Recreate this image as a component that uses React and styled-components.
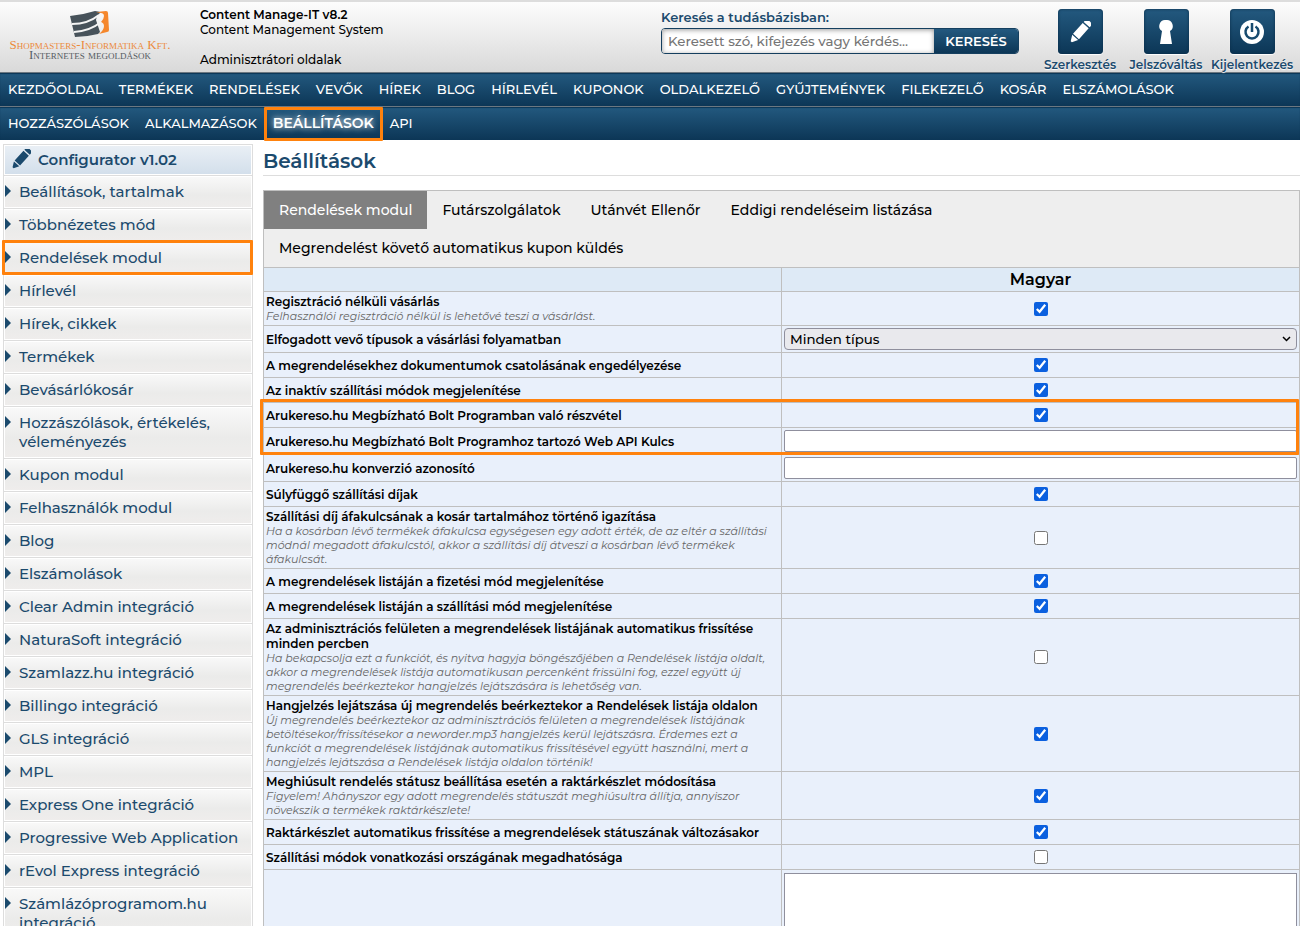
import React from 'react';
import styled, { createGlobalStyle, css } from 'styled-components';

const GlobalStyle = createGlobalStyle`
	* {
		box-sizing: border-box;
	}
	body {
		margin: 0;
		background: #fff;
		color: #000;
		font-family: Montserrat, Inter, 'Noto Sans', sans-serif;
		font-size: 13px;
		font-weight: 500;
		line-height: 15px;
	}
	a {
		color: inherit;
		text-decoration: none;
	}
	#root {
		height: 100vh;
		overflow: hidden;
	}
`;

const navy = '#1b4a6d';
const orange = '#ff820d';
const line = '#bfbfbf';
const blueGradient = 'linear-gradient(#23597f, #0c3656)';

const outline = css`
	position: relative;
	z-index: 1;
	&::after {
		content: '';
		position: absolute;
		border: 3px solid ${orange};
		border-radius: 1px;
		pointer-events: none;
	}
`;

const Header = styled.header`
	display: flex;
	height: 72px;
	border-top: 2px solid #ddd;
	background: linear-gradient(#fdfdfd, #d9d9d9);
`;

const Brand = styled.a`
	display: flex;
	flex-direction: column;
	align-items: center;
	width: 180px;
	margin-right: 20px;
	padding-top: 9px;
	font-family: 'Liberation Serif', serif;
	font-variant: small-caps;
	font-weight: 400;
	font-size: 13px;
	line-height: 10px;
	color: #555c62;
	white-space: nowrap;
	svg {
		display: block;
		margin-bottom: 2px;
	}
	span {
		color: #ec8a3c;
	}
`;

const Info = styled.div`
	flex: 1;
	padding-top: 5px;
	font-size: 12px;
	strong {
		font-weight: 600;
	}
	p {
		margin: 0 0 15px;
	}
`;

const Search = styled.form`
	width: 358px;
	margin-right: 18px;
	padding-top: 8px;
	label {
		display: block;
		margin-bottom: 3px;
		font-weight: 600;
		color: ${navy};
	}
	div {
		display: flex;
		height: 26px;
		border: 1px solid #153f5f;
		border-radius: 4px;
		overflow: hidden;
	}
	input {
		flex: 1;
		min-width: 0;
		border: 0;
		padding: 0 6px;
		font-family: inherit;
		font-weight: inherit;
		background: #fff;
		box-shadow: inset 0 1px 5px #999;
	}
	input::placeholder {
		color: #757575;
	}
	button {
		width: 84px;
		border: 0;
		padding: 0;
		font: inherit;
		font-weight: 600;
		color: #fff;
		background: ${blueGradient};
	}
`;

const Actions = styled.div`
	display: flex;
	padding-right: 5px;
`;

const Action = styled.a`
	display: flex;
	flex-direction: column;
	align-items: center;
	width: 86px;
	padding-top: 7px;
	font-size: 12px;
	font-weight: 600;
	color: ${navy};
	text-shadow: 0 1px 1px #fff;
	white-space: nowrap;
	span {
		display: flex;
		align-items: center;
		justify-content: center;
		width: 45px;
		height: 45px;
		margin-bottom: 3px;
		border-radius: 4px;
		background: ${blueGradient};
		box-shadow: inset 0 0 3px #0a2c47, 0 1px 1px #fff;
	}
`;

const Nav = styled.nav`
	display: flex;
	height: 34px;
	border-top: 1px solid #6c7780;
	background: ${blueGradient};
	box-shadow: inset 0 1px 1px #0c3656;
	color: #fff;
`;

const NavLink = styled.a`
	padding: 0 8px;
	line-height: 32px;
	white-space: nowrap;
	${(p) =>
		p.$active &&
		css`
			font-size: 14px;
			font-weight: 600;
			text-shadow: 0 0 6px #fff;
			${outline}
			&::after {
				inset: 0 -1px -1px;
			}
		`}
`;

const Columns = styled.div`
	display: flex;
	align-items: flex-start;
`;

const Sidebar = styled.aside`
	width: 250px;
	margin: 4px 10px 0 3px;
	border: 1px solid #ddd;
	color: ${navy};
`;

const SidebarTitle = styled.h2`
	display: flex;
	align-items: center;
	gap: 7px;
	height: 30px;
	margin: 0;
	padding: 0 0 2px 6px;
	border: 1px solid #fff;
	background: linear-gradient(#e9eff5, #d3dfeb);
	font-size: 15px;
	font-weight: 600;
`;

const SidebarItem = styled.a`
	display: block;
	position: relative;
	border-top: 1px solid #ddd;
	padding: 6px 8px 7px 15px;
	font-size: 15px;
	line-height: 19px;
	background: linear-gradient(#f9f9f9, #ebebea 60%, #efedec);
	box-shadow: inset 0 0 0 1px #fff;
	&::before {
		content: '';
		position: absolute;
		top: 9px;
		left: 1px;
		border: 6px solid transparent;
		border-left-color: ${navy};
		border-right: 0;
	}
	${(p) =>
		p.$active &&
		css`
			${outline}
			&::after {
				inset: -2px -1px -1px -2px;
			}
		`}
`;

const Main = styled.main`
	flex: 1;
	min-width: 0;
	h1 {
		margin: 0 0 14px;
		padding: 9px 0 2px;
		border-bottom: 1px solid #ddd;
		font-size: 20px;
		font-weight: 600;
		line-height: 24px;
		color: ${navy};
	}
`;

const Panel = styled.div`
	border: 1px solid ${line};
	border-bottom: 0;
`;

const Tabs = styled.div`
	display: flex;
	flex-wrap: wrap;
	background: #eee;
`;

const Tab = styled.button`
	height: 38px;
	border: 0;
	padding: 0 15px;
	font: inherit;
	font-size: 14px;
	color: ${(p) => (p.$active ? '#fff' : '#000')};
	background: ${(p) => (p.$active ? '#808080' : 'transparent')};
`;

const Table = styled.table`
	width: 100%;
	border-collapse: collapse;
	table-layout: fixed;
	background: #e9f0fb;
	th,
	td {
		border-top: 1px solid ${line};
		padding: 2px;
		text-align: left;
		font-weight: inherit;
	}
	th + th,
	th + td {
		border-left: 1px solid ${line};
	}
	thead tr {
		background: #deeaf6;
	}
	thead th {
		height: 24px;
		font-size: 16px;
		font-weight: 600;
		line-height: 19px;
		text-align: center;
	}
`;

const Group = styled.tbody`
	${(p) =>
		p.$marked &&
		css`
			${outline}
			&::after {
				inset: -4px 0 0 -4px;
			}
		`}
`;

const Label = styled.label`
	display: block;
	font-size: 12px;
	font-weight: 600;
	line-height: 15px;
	white-space: pre-line;
`;

const Hint = styled.small`
	display: block;
	font-size: 11px;
	font-style: italic;
	font-weight: 400;
	line-height: 14px;
	color: #666;
	white-space: pre-line;
`;

const Checkbox = styled.input`
	display: block;
	width: 14px;
	height: 14px;
	margin: 3px auto;
	accent-color: #0b60df;
`;

const field = css`
	display: block;
	width: 100%;
	border: 1px solid #8f8f9d;
	font-family: inherit;
	font-weight: inherit;
	background: #fff;
`;

const TextInput = styled.input`
	${field}
	height: 22px;
	border-radius: 2px;
`;

const TextArea = styled.textarea`
	${field}
	height: 90px;
	margin-top: 1px;
	resize: none;
`;

const SelectWrap = styled.div`
	display: grid;
	align-items: center;
	select,
	svg {
		grid-area: 1 / 1;
	}
	svg {
		justify-self: end;
		margin-right: 6px;
		pointer-events: none;
	}
`;

const Select = styled.select`
	${field}
	height: 22px;
	border-radius: 4px;
	padding: 0 5px;
	appearance: none;
	background: #e9e9ed;
	color: #000;
`;

const Logo = () => (
	<svg width="40" height="27" viewBox="0 0 40 27">
		<path d="M0 5Q12 4 25 0L31 1Q27 4 26 9L30 21 28 23Q16 26 5 26z" fill="#47525a" />
		<path
			d="M26 2Q31 0 36 0q2 0 2 2l1 17q0 2-2 2l-8 2q5-4 5-8 0-3-3-4 3-3 3-6 0-4-8-3z"
			fill="#f5872c"
		/>
		<path
			d="M2 13Q18 13 29 4M4 21Q20 20 31 11"
			fill="none"
			stroke="#f4f4f4"
			strokeWidth="2"
		/>
	</svg>
);

const Pencil = ({ size, color }) => (
	<svg width={size} height={size} viewBox="0 0 22 22" fill={color}>
		<g transform="rotate(42 11 11)">
			<path d="M7 1v-1.500a4 3 0 0 1 8 0V1zM7 2.500h8v14.500H7zM7 18.200h8l-3.200 5.800h-1.600z" />
		</g>
	</svg>
);

const Keyhole = () => (
	<svg width="24" height="26" viewBox="0 0 24 26" fill="#fff">
		<path d="M12 1a6 6 0 0 1 4 11l2 13H6l2-13a6 6 0 0 1 4-11z" />
	</svg>
);

const Power = () => (
	<svg width="26" height="26" viewBox="0 0 26 26">
		<circle cx="13" cy="13" r="12" fill="#fff" />
		<path
			d="M9.500 7.500a6.500 6.500 0 1 0 7 0M13 4v9"
			fill="none"
			stroke="#174a6e"
			strokeWidth="2.500"
		/>
	</svg>
);

const actions = [
	['Szerkesztés', <Pencil size={22} color="#fff" />],
	['Jelszóváltás', <Keyhole />],
	['Kijelentkezés', <Power />],
];

const mainMenu = [
	'KEZDŐOLDAL',
	'TERMÉKEK',
	'RENDELÉSEK',
	'VEVŐK',
	'HÍREK',
	'BLOG',
	'HÍRLEVÉL',
	'KUPONOK',
	'OLDALKEZELŐ',
	'GYŰJTEMÉNYEK',
	'FILEKEZELŐ',
	'KOSÁR',
	'ELSZÁMOLÁSOK',
];

const subMenu = ['HOZZÁSZÓLÁSOK', 'ALKALMAZÁSOK', 'BEÁLLÍTÁSOK', 'API'];

const sideMenu = [
	'Beállítások, tartalmak',
	'Többnézetes mód',
	'Rendelések modul',
	'Hírlevél',
	'Hírek, cikkek',
	'Termékek',
	'Bevásárlókosár',
	'Hozzászólások, értékelés, véleményezés',
	'Kupon modul',
	'Felhasználók modul',
	'Blog',
	'Elszámolások',
	'Clear Admin integráció',
	'NaturaSoft integráció',
	'Szamlazz.hu integráció',
	'Billingo integráció',
	'GLS integráció',
	'MPL',
	'Express One integráció',
	'Progressive Web Application',
	'rEvol Express integráció',
	'Számlázóprogramom.hu integráció',
];

const tabs = [
	'Rendelések modul',
	'Futárszolgálatok',
	'Utánvét Ellenőr',
	'Eddigi rendeléseim listázása',
	'Megrendelést követő automatikus kupon küldés',
];

const groups = [
	{
		rows: [
			{
				label: 'Regisztráció nélküli vásárlás',
				hint: 'Felhasználói regisztráció nélkül is lehetővé teszi a vásárlást.',
				checked: true,
			},
			{
				label: 'Elfogadott vevő típusok a vásárlási folyamatban',
				type: 'select',
			},
			{
				label: 'A megrendelésekhez dokumentumok csatolásának engedélyezése',
				checked: true,
			},
			{ label: 'Az inaktív szállítási módok megjelenítése', checked: true },
		],
	},
	{
		marked: true,
		rows: [
			{
				label: 'Arukereso.hu Megbízható Bolt Programban való részvétel',
				checked: true,
			},
			{
				label: 'Arukereso.hu Megbízható Bolt Programhoz tartozó Web API Kulcs',
				type: 'text',
			},
		],
	},
	{
		rows: [
			{ label: 'Arukereso.hu konverzió azonosító', type: 'text' },
			{ label: 'Súlyfüggő szállítási díjak', checked: true },
			{
				label: 'Szállítási díj áfakulcsának a kosár tartalmához történő igazítása',
				hint: 'Ha a kosárban lévő termékek áfakulcsa egységesen egy adott érték, de az eltér a szállítási\nmódnál megadott áfakulcstól, akkor a szállítási díj átveszi a kosárban lévő termékek\náfakulcsát.',
			},
			{
				label: 'A megrendelések listáján a fizetési mód megjelenítése',
				checked: true,
			},
			{
				label: 'A megrendelések listáján a szállítási mód megjelenítése',
				checked: true,
			},
			{
				label: 'Az adminisztrációs felületen a megrendelések listájának automatikus frissítése\nminden percben',
				hint: 'Ha bekapcsolja ezt a funkciót, és nyitva hagyja böngészőjében a Rendelések listája oldalt,\nakkor a megrendelések listája automatikusan percenként frissülni fog, ezzel együtt új\nmegrendelés beérkeztekor hangjelzés lejátszására is lehetőség van.',
			},
			{
				label: 'Hangjelzés lejátszása új megrendelés beérkeztekor a Rendelések listája oldalon',
				hint: 'Új megrendelés beérkeztekor az adminisztrációs felületen a megrendelések listájának\nbetöltésekor/frissítésekor a neworder.mp3 hangjelzés kerül lejátszásra. Érdemes ezt a\nfunkciót a megrendelések listájának automatikus frissítésével együtt használni, mert a\nhangjelzés lejátszása a Rendelések listája oldalon történik!',
				checked: true,
			},
			{
				label: 'Meghiúsult rendelés státusz beállítása esetén a raktárkészlet módosítása',
				hint: 'Figyelem! Ahányszor egy adott megrendelés státuszát meghiúsultra állítja, annyiszor\nnövekszik a termékek raktárkészlete!',
				checked: true,
			},
			{
				label: 'Raktárkészlet automatikus frissítése a megrendelések státuszának változásakor',
				checked: true,
			},
			{ label: 'Szállítási módok vonatkozási országának megadhatósága' },
			{ label: '', type: 'textarea' },
		],
	},
];

const Field = ({ id, row }) => {
	switch (row.type) {
		case 'select':
			return (
				<SelectWrap>
					<Select id={id}>
						<option>Minden típus</option>
					</Select>
					<svg width="9" height="6" viewBox="0 0 9 6">
						<path
							d="M1 1l3.500 3.500L8 1"
							fill="none"
							stroke="#000"
							strokeWidth="1.500"
						/>
					</svg>
				</SelectWrap>
			);
		case 'text':
			return <TextInput id={id} type="text" />;
		case 'textarea':
			return <TextArea id={id} />;
		default:
			return <Checkbox id={id} type="checkbox" defaultChecked={row.checked} />;
	}
};

const App = () => (
	<>
		<GlobalStyle />
		<Header>
			<Brand href="#">
				<Logo />
				<span>Shopmasters-Informatika Kft.</span>
				Internetes megoldások
			</Brand>
			<Info>
				<strong>Content Manage-IT v8.2</strong>
				<p>Content Management System</p>
				Adminisztrátori oldalak
			</Info>
			<Search>
				<label htmlFor="search">Keresés a tudásbázisban:</label>
				<div>
					<input
						id="search"
						type="text"
						placeholder="Keresett szó, kifejezés vagy kérdés..."
					/>
					<button type="button">KERESÉS</button>
				</div>
			</Search>
			<Actions>
				{actions.map(([name, icon]) => (
					<Action href="#" key={name}>
						<span>{icon}</span>
						{name}
					</Action>
				))}
			</Actions>
		</Header>
		<Nav>
			{mainMenu.map((name) => (
				<NavLink href="#" key={name}>
					{name}
				</NavLink>
			))}
		</Nav>
		<Nav>
			{subMenu.map((name) => (
				<NavLink href="#" key={name} $active={name === 'BEÁLLÍTÁSOK'}>
					{name}
				</NavLink>
			))}
		</Nav>
		<Columns>
			<Sidebar>
				<SidebarTitle>
					<Pencil size={20} color={navy} />
					Configurator v1.02
				</SidebarTitle>
				{sideMenu.map((name) => (
					<SidebarItem
						href="#"
						key={name}
						$active={name === 'Rendelések modul'}
					>
						{name}
					</SidebarItem>
				))}
			</Sidebar>
			<Main>
				<h1>Beállítások</h1>
				<Panel>
					<Tabs>
						{tabs.map((name, i) => (
							<Tab type="button" key={name} $active={i === 0}>
								{name}
							</Tab>
						))}
					</Tabs>
					<Table>
						<thead>
							<tr>
								<th />
								<th>Magyar</th>
							</tr>
						</thead>
						{groups.map((group, g) => (
							<Group key={g} $marked={group.marked}>
								{group.rows.map((row, r) => {
									const id = `setting-${g}-${r}`;
									return (
										<tr key={id}>
											<th scope="row">
												<Label htmlFor={id}>{row.label}</Label>
												{row.hint && <Hint>{row.hint}</Hint>}
											</th>
											<td>
												<Field id={id} row={row} />
											</td>
										</tr>
									);
								})}
							</Group>
						))}
					</Table>
				</Panel>
			</Main>
		</Columns>
	</>
);

export default App;
